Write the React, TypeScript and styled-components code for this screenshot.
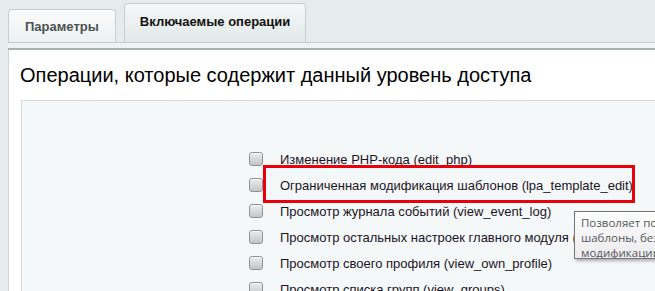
import React from "react";
import styled, { createGlobalStyle } from "styled-components";

const Global = createGlobalStyle`
  html, body { margin: 0; padding: 0; }
  body {
    background: #e6ecec;
    font-family: "Liberation Sans", Arial, sans-serif;
    width: 655px;
    height: 291px;
    overflow: hidden;
  }
`;

const Page = styled.div`
  display: flex;
  flex-direction: column;
`;

const TabBar = styled.div`
  flex: none;
  display: flex;
  align-items: flex-end;
  gap: 8px;
  padding: 3px 0 0 8px;
  height: 39px;
`;

const Tab = styled.div<{ $active?: boolean }>`
  box-sizing: border-box;
  height: ${(p) => (p.$active ? 39 : 33)}px;
  padding: 0 ${(p) => (p.$active ? 15 : 16)}px;
  display: flex;
  align-items: center;
  padding-bottom: ${(p) => (p.$active ? 3 : 0)}px;
  border: 1px solid #c6cece;
  border-bottom: none;
  border-radius: 4px 4px 0 0;
  background: ${(p) =>
    p.$active
      ? "linear-gradient(#f4f7f7, #e2e9e9)"
      : "linear-gradient(#fbfcfc, #edf1f1)"};
  font-size: 13px;
  font-weight: bold;
  color: ${(p) => (p.$active ? "#111" : "#4c5152")};
`;

const Strip = styled.div`
  flex: none;
  margin-left: 8px;
  height: 5px;
  border-top: 1px solid #c4cccc;
  border-bottom: 2px solid #a7afaf;
  background: #eef3f3;
`;

const Panel = styled.div`
  position: relative;
  margin-left: 8px;
  background: #fff;
  border-left: 1px solid #cfd6d6;
  display: flex;
  flex-direction: column;
`;

const Heading = styled.h1`
  box-sizing: border-box;
  margin: 0;
  padding: 13px 0 0 11px;
  height: 50px;
  font-size: 20px;
  line-height: 24px;
  font-weight: normal;
  color: #000;
  white-space: nowrap;
`;

const Inner = styled.div`
  margin-left: 12px;
  background: #f5f8f9;
  border-left: 1px solid #d6dbdb;
  border-top: 1px solid #d6dbdb;
  padding: 45px 0 20px 227px;
  display: flex;
  flex-direction: column;
`;

const Row = styled.label`
  display: flex;
  align-items: center;
  gap: 17px;
  height: 26px;
  font-size: 13px;
  color: #1b1424;
  white-space: nowrap;
`;

const Box = styled.span`
  box-sizing: border-box;
  width: 14px;
  height: 14px;
  flex: none;
  border-radius: 3px;
  border: 1px solid #8f9393;
  background: linear-gradient(#ececec, #c4c6c6);
  box-shadow: inset 0 1px 0 #fafafa;
`;

const Highlight = styled.div`
  position: absolute;
  left: 254px;
  top: 115px;
  width: 372px;
  height: 38px;
  box-sizing: border-box;
  border: 3px solid #e8000b;
  pointer-events: none;
`;

const Tooltip = styled.div`
  position: absolute;
  left: 565px;
  top: 161px;
  width: 120px;
  height: 48px;
  box-sizing: border-box;
  padding: 3px 0 0 6px;
  border: 1px solid #767676;
  background: linear-gradient(#fdfdfd, #ececf0);
  box-shadow: 2px 2px 3px rgba(0, 0, 0, 0.3);
  font-family: "Open Sans", "Noto Sans", sans-serif;
  font-size: 11.5px;
  line-height: 15px;
  color: #575757;
  white-space: nowrap;
  overflow: hidden;
`;

const items = [
  "Изменение PHP-кода (edit_php)",
  "Ограниченная модификация шаблонов (lpa_template_edit)",
  "Просмотр журнала событий (view_event_log)",
  "Просмотр остальных настроек главного модуля (view_other_settings)",
  "Просмотр своего профиля (view_own_profile)",
  "Просмотр списка групп (view_groups)",
];

export default function App() {
  return (
    <>
      <Global />
      <Page>
        <TabBar>
          <Tab>Параметры</Tab>
          <Tab $active>Включаемые операции</Tab>
        </TabBar>
        <Strip />
        <Panel>
          <Heading>Операции, которые содержит данный уровень доступа</Heading>
          <Inner>
            {items.map((t) => (
              <Row key={t}>
                <Box />
                {t}
              </Row>
            ))}
          </Inner>
          <Highlight />
          <Tooltip>
            Позволяет пользователю редактировать
            <br />
            шаблоны, без возможности
            <br />
            модификации PHP-кода
          </Tooltip>
        </Panel>
      </Page>
    </>
  );
}
